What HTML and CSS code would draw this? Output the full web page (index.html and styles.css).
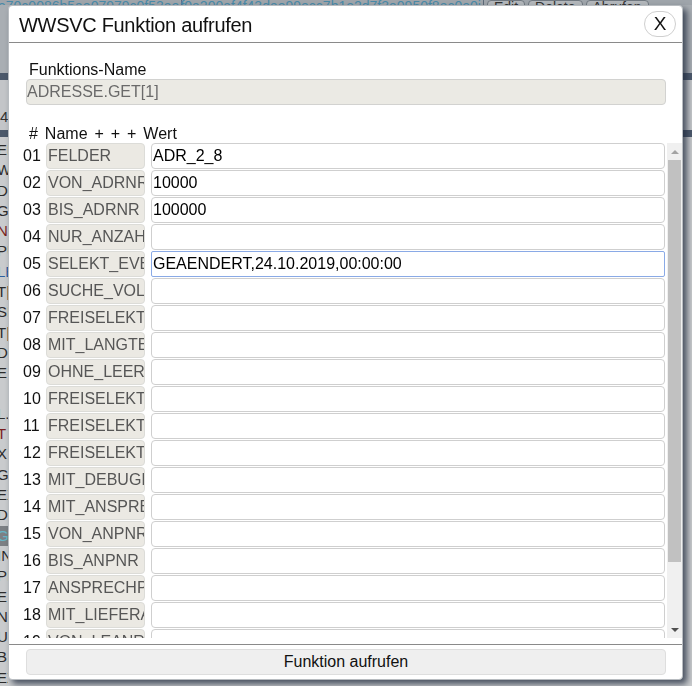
FILE: index.html
```html
<!DOCTYPE html>
<html lang="de">
<head>
<meta charset="utf-8">
<title>WWSVC Funktion aufrufen</title>
<link rel="stylesheet" href="styles.css">
</head>
<body>
<div class="page">
  <div class="topline"><span class="hash">e70c0086b5ae07979c0f53ae</span><span class="hash">f0a200af4f43dae99ecc7b1e2d7f3a0950f8ac0e0i</span><span class="tb">Edit</span><span class="tb">Delete</span><span class="tb">Abrufen</span></div>
  <div class="block1"></div>
  <div class="band"></div>
  <div class="block2"><div class="bline">4</div></div>
  <div class="band"></div>
  <div class="lines">
    <div class="ln">ER</div>
    <div class="ln">W</div>
    <div class="ln">DE</div>
    <div class="ln">GE</div>
    <div class="ln red">N</div>
    <div class="ln">PU</div>
    <div class="ln blue">LE</div>
    <div class="ln">T|</div>
    <div class="ln">SE</div>
    <div class="ln">T|</div>
    <div class="ln">DC</div>
    <div class="ln">E</div>
    <div class="ln"></div>
    <div class="ln">L.C</div>
    <div class="ln red">T</div>
    <div class="ln">X</div>
    <div class="ln">GE</div>
    <div class="ln">EX</div>
    <div class="ln">D</div>
    <div class="ln hl">G</div>
    <div class="ln">IN</div>
    <div class="ln">PI</div>
    <div class="ln">E</div>
    <div class="ln">NS</div>
    <div class="ln">U</div>
    <div class="ln">B.</div>
    <div class="ln">EX</div>
  </div>
</div>

<div class="dialog">
  <div class="header">
    <span class="title">WWSVC Funktion aufrufen</span>
    <button class="close" type="button">X</button>
  </div>
  <div class="fn-section">
    <div class="label">Funktions-Name</div>
    <div class="fn-input">ADRESSE.GET[1]</div>
  </div>
  <div class="colhead"># Name + + + Wert</div>
  <div class="list">
    <div class="rows">
      <div class="row"><span class="num">01</span><span class="name">FELDER</span><span class="value">ADR_2_8</span></div>
      <div class="row"><span class="num">02</span><span class="name">VON_ADRNR</span><span class="value">10000</span></div>
      <div class="row"><span class="num">03</span><span class="name">BIS_ADRNR</span><span class="value">100000</span></div>
      <div class="row"><span class="num">04</span><span class="name">NUR_ANZAHL</span><span class="value"></span></div>
      <div class="row"><span class="num">05</span><span class="name">SELEKT_EVENT</span><span class="value focus">GEAENDERT,24.10.2019,00:00:00</span></div>
      <div class="row"><span class="num">06</span><span class="name">SUCHE_VOLLTEXT</span><span class="value"></span></div>
      <div class="row"><span class="num">07</span><span class="name">FREISELEKTION</span><span class="value"></span></div>
      <div class="row"><span class="num">08</span><span class="name">MIT_LANGTEXT</span><span class="value"></span></div>
      <div class="row"><span class="num">09</span><span class="name">OHNE_LEERE</span><span class="value"></span></div>
      <div class="row"><span class="num">10</span><span class="name">FREISELEKTION</span><span class="value"></span></div>
      <div class="row"><span class="num">11</span><span class="name">FREISELEKTION</span><span class="value"></span></div>
      <div class="row"><span class="num">12</span><span class="name">FREISELEKTION</span><span class="value"></span></div>
      <div class="row"><span class="num">13</span><span class="name">MIT_DEBUGINFO</span><span class="value"></span></div>
      <div class="row"><span class="num">14</span><span class="name">MIT_ANSPRECHPARTNER</span><span class="value"></span></div>
      <div class="row"><span class="num">15</span><span class="name">VON_ANPNR</span><span class="value"></span></div>
      <div class="row"><span class="num">16</span><span class="name">BIS_ANPNR</span><span class="value"></span></div>
      <div class="row"><span class="num">17</span><span class="name">ANSPRECHPARTNER</span><span class="value"></span></div>
      <div class="row"><span class="num">18</span><span class="name">MIT_LIEFERANSCHRIFT</span><span class="value"></span></div>
      <div class="row"><span class="num">19</span><span class="name">VON_LEANR</span><span class="value"></span></div>
    </div>
    <div class="scrollbar">
      <div class="sb-btn"><span class="arrow-up"></span></div>
      <div class="sb-thumb"></div>
      <div class="sb-rest"></div>
      <div class="sb-btn"><span class="arrow-down"></span></div>
    </div>
  </div>
  <div class="footer">
    <button class="call" type="button">Funktion aufrufen</button>
  </div>
</div>
</body>
</html>
```

FILE: styles.css
```css
html, body {
  margin: 0;
  padding: 0;
}
body {
  width: 692px;
  height: 686px;
  overflow: hidden;
  background: #a7abb0;
  font-family: "Liberation Sans", Arial, sans-serif;
}

/* background page (covered by dialog) */
.page {
  width: 692px;
  height: 686px;
  overflow: hidden;
  background: #c6c8ca;
}
.topline {
  height: 5px;
  overflow: hidden;
  background: #9fa5ab;
  white-space: nowrap;
  font-size: 14px;
  line-height: 12px;
}
.hash {
  display: inline-block;
  vertical-align: top;
  color: #4a8aa8;
  padding-right: 2px;
  border-right: 1px solid #5d6a78;
  text-indent: -2px;
}
.tb {
  display: inline-block;
  vertical-align: top;
  margin-left: 3px;
  padding: 0 6px;
  border: 1px solid #707880;
  border-radius: 4px;
  background: #b4b8bc;
  color: #333;
}
.block1 {
  height: 68px;
  background: #a9aeb3;
}
.band {
  height: 7px;
  background: #4c596b;
}
.block2 {
  height: 50px;
  width: 8px;
  overflow: hidden;
  background: #c3c5c8;
}
.bline {
  padding-top: 28px;
  font-size: 15px;
  line-height: 18px;
  color: #333;
}
.lines {
  background: #c9cbcd;
  padding-top: 3px;
  height: 560px;
}
.ln {
  width: 8px;
  overflow: hidden;
  height: 20.3px;
  font-size: 15px;
  line-height: 20px;
  color: #2c2c2c;
  white-space: nowrap;
  text-indent: -3px;
}
.ln.red { color: #7a1e1e; }
.ln.blue { color: #2d5fa0; }
.ln.hl { background: #7c8084; color: #66b6c8; }

/* dialog */
.dialog {
  position: fixed;
  left: 8px;
  top: 5px;
  width: 675px;
  height: 675px;
  box-sizing: border-box;
  border: 1px solid #b8bcc0;
  border-radius: 4px;
  background: #fff;
  display: flex;
  flex-direction: column;
  box-shadow: 4px 4px 6px rgba(30, 40, 60, 0.75);
}
.header {
  height: 37px;
  flex: none;
  box-sizing: border-box;
  border-bottom: 1px solid #8a8a8a;
  display: flex;
  align-items: center;
  justify-content: space-between;
  padding: 0 6px 0 10px;
}
.title {
  font-family: "Liberation Sans", Arial, sans-serif;
  font-size: 20px;
  letter-spacing: -0.3px;
  color: #111;
  margin-top: 2px;
}
.close {
  width: 32px;
  height: 26px;
  box-sizing: border-box;
  border: 1px solid #cfcfcf;
  border-radius: 13px;
  background: #fff;
  font-family: "Liberation Sans", Arial, sans-serif;
  font-size: 19px;
  line-height: 22px;
  color: #111;
  padding: 0;
  margin-top: -1px;
}
.fn-section {
  flex: none;
  padding: 18px 17px 0 17px;
}
.label {
  height: 18px;
  line-height: 18px;
  font-size: 16px;
  color: #111;
  padding-left: 3px;
}
.fn-input {
  height: 26px;
  box-sizing: border-box;
  border: 1px solid #d2d2d0;
  border-radius: 4px;
  background: #ebeae4;
  color: #6a6a6a;
  font-size: 16px;
  line-height: 24px;
  padding-left: 0;
  width: 640px;
}
.colhead {
  flex: none;
  margin-top: 20px;
  height: 18px;
  line-height: 18px;
  font-size: 16px;
  word-spacing: 2.5px;
  color: #111;
  padding-left: 20px;
}
.list {
  flex: none;
  height: 495px;
  display: flex;
  overflow: hidden;
}
.rows {
  width: 658px;
  padding-left: 14px;
  box-sizing: border-box;
  overflow: hidden;
  display: flex;
  flex-direction: column;
  gap: 1px;
}
.row {
  flex: none;
  display: flex;
  height: 26px;
  font-size: 16px;
}
.num {
  width: 23px;
  flex: none;
  line-height: 26px;
  color: #111;
}
.name {
  width: 99px;
  flex: none;
  height: 26px;
  box-sizing: border-box;
  border: 1px solid #dcdcd8;
  border-radius: 4px;
  background: #ebe9e3;
  color: #565656;
  line-height: 24px;
  padding-left: 1px;
  overflow: hidden;
  white-space: nowrap;
  margin-right: 6px;
}
.value {
  width: 514px;
  flex: none;
  height: 26px;
  box-sizing: border-box;
  border: 1px solid #cfcfcf;
  border-radius: 4px;
  background: #fff;
  color: #000;
  line-height: 24px;
  padding-left: 1px;
  white-space: nowrap;
  overflow: hidden;
}
.value.focus {
  border-color: #8aaae6;
  border-radius: 2px;
}
.scrollbar {
  width: 15px;
  flex: none;
  background: #f0f0f0;
  display: flex;
  flex-direction: column;
}
.sb-btn {
  height: 17px;
  flex: none;
  display: flex;
  align-items: center;
  justify-content: center;
}
.arrow-up {
  width: 0;
  height: 0;
  border-left: 4px solid transparent;
  border-right: 4px solid transparent;
  border-bottom: 4px solid #a3a3a3;
}
.arrow-down {
  width: 0;
  height: 0;
  border-left: 4px solid transparent;
  border-right: 4px solid transparent;
  border-top: 4px solid #505050;
}
.sb-thumb {
  flex: none;
  height: 402px;
  margin: 0 1px;
  background: #c1c1c1;
}
.sb-rest {
  flex: 1;
}
.footer {
  flex: none;
  margin-top: 6px;
  border-top: 1px solid #8a8a8a;
  padding: 4px 17px 4px 17px;
}
.call {
  display: block;
  width: 640px;
  height: 26px;
  box-sizing: border-box;
  border: 1px solid #dedede;
  border-radius: 4px;
  background: #efefef;
  font-family: "Liberation Sans", Arial, sans-serif;
  font-size: 16px;
  line-height: 24px;
  color: #111;
  padding: 0;
}
```
